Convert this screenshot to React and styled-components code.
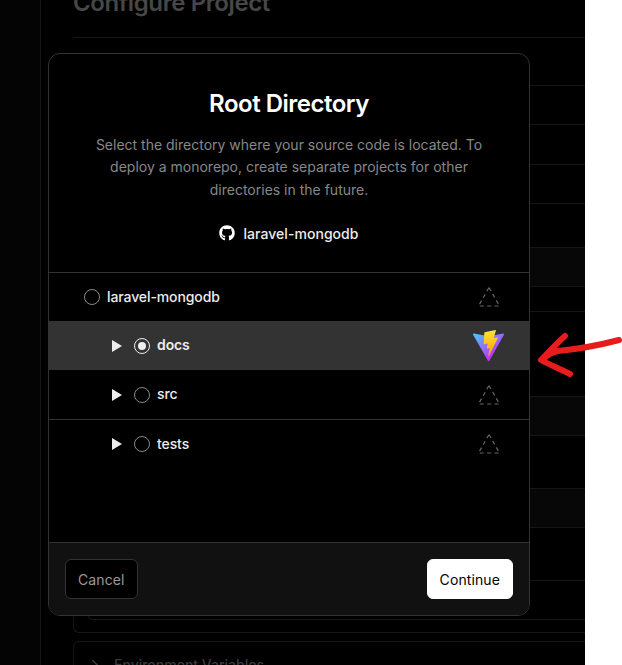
import React from 'react';
import styled, { createGlobalStyle } from 'styled-components';
import { ChevronRight } from 'lucide-react';
import { FaGithub } from 'react-icons/fa';

const GlobalStyle = createGlobalStyle`
  html, body {
    margin: 0;
    padding: 0;
    background: #fff;
    font-family: Inter, "Liberation Sans", sans-serif;
  }
  * {
    box-sizing: border-box;
  }
`;

const Stage = styled.div`
  position: relative;
  width: 622px;
  height: 665px;
  overflow: hidden;
  background: #fff;
`;

const Backdrop = styled.div`
  display: flex;
  width: 585px;
  height: 665px;
  overflow: hidden;
  background: #000;
`;

const Rail = styled.div`
  flex: 0 0 41px;
  background: #040404;
  border-right: 1px solid #141414;
`;

const Content = styled.div`
  flex: 1;
  min-width: 0;
  padding-left: 32px;
`;

const PageTitle = styled.h1`
  margin: -13px 0 0;
  height: 51px;
  font-size: 24px;
  line-height: 32px;
  font-weight: 600;
  letter-spacing: -0.4px;
  color: #474747;
  border-bottom: 1px solid #151515;
`;

const OuterCard = styled.div`
  margin-top: 47px;
  padding-left: 13px;
  padding-bottom: 12px;
  border-left: 1px solid #161616;
  border-bottom: 1px solid #161616;
  border-bottom-left-radius: 6px;
`;

const InnerCard = styled.div`
  border-left: 1px solid #161616;
  border-bottom: 1px solid #161616;
  border-bottom-left-radius: 6px;
`;

const BackRow = styled.div`
  height: ${(p) => p.$height}px;
  background: ${(p) => (p.$shaded ? '#070707' : 'transparent')};
  border-top: 1px solid #151515;
`;

const EnvCard = styled.div`
  display: flex;
  align-items: center;
  gap: 10px;
  margin-top: 8px;
  height: 46px;
  padding-left: 12px;
  border: 1px solid #161616;
  border-right: 0;
  border-bottom: 0;
  border-top-left-radius: 6px;
  color: #3a3a3a;
  font-size: 14px;
  font-weight: 500;
  white-space: nowrap;
`;

const Modal = styled.div`
  position: absolute;
  left: 48px;
  top: 53px;
  width: 482px;
  height: 563px;
  display: flex;
  flex-direction: column;
  overflow: hidden;
  background: #000;
  border: 1px solid #333;
  border-radius: 12px;
`;

const Header = styled.header`
  display: flex;
  flex-direction: column;
  align-items: center;
  padding: 34px 0 29px;
`;

const Title = styled.h2`
  margin: 0;
  font-size: 24px;
  line-height: 32px;
  font-weight: 600;
  letter-spacing: -0.5px;
  color: #fff;
`;

const Description = styled.p`
  margin: 14px 0 0;
  width: 400px;
  font-size: 14px;
  line-height: 22.4px;
  text-align: center;
  color: #888;
`;

const Repo = styled.div`
  display: flex;
  align-items: center;
  gap: 8px;
  margin-top: 22px;
  height: 20px;
  font-size: 14px;
  font-weight: 500;
  letter-spacing: 0.05px;
  color: #ededed;
`;

const List = styled.div`
  flex: 1;
`;

const Row = styled.div`
  display: flex;
  align-items: center;
  height: 49px;
  padding: 0 24px 0 ${(p) => (p.$nested ? 63 : 35)}px;
  background: ${(p) => (p.$selected ? '#333' : 'transparent')};
  border-top: ${(p) => (p.$divided ? '1px solid #333' : '0')};
`;

const Caret = styled.span`
  width: 0;
  height: 0;
  margin-right: 12px;
  border-style: solid;
  border-width: 6px 0 6px 10px;
  border-color: transparent transparent transparent #ededed;
`;

const Radio = styled.span`
  display: flex;
  align-items: center;
  justify-content: center;
  width: 16px;
  height: 16px;
  margin-right: 7px;
  border-radius: 50%;
  border: 1px solid ${(p) => (p.$checked ? '#ededed' : '#888')};
  &::after {
    content: '';
    display: ${(p) => (p.$checked ? 'block' : 'none')};
    width: 8px;
    height: 8px;
    border-radius: 50%;
    background: #ededed;
  }
`;

const RowLabel = styled.span`
  flex: 1;
  padding-bottom: 2px;
  font-size: 14px;
  font-weight: ${(p) => (p.$checked ? 600 : 500)};
  letter-spacing: -0.1px;
  color: #ededed;
`;

const FrameworkSlot = styled.span`
  display: flex;
  justify-content: center;
  flex: 0 0 33px;
`;

const Footer = styled.footer`
  display: flex;
  justify-content: space-between;
  height: 73px;
  padding: 16px;
  background: #111;
  border-top: 1px solid #333;
`;

const Button = styled.button`
  height: 40px;
  min-width: 72px;
  padding: 0 12px;
  font-family: inherit;
  font-size: 14px;
  font-weight: 400;
  letter-spacing: 0.1px;
  border-radius: 6px;
  border: 1px solid ${(p) => (p.$primary ? '#fff' : '#333')};
  background: ${(p) => (p.$primary ? '#fff' : '#000')};
  color: ${(p) => (p.$primary ? '#000' : '#999')};
`;

const Annotation = styled.svg`
  position: absolute;
  left: 530px;
  top: 325px;
`;

const DashedTriangle = () => (
  <svg width="24" height="22" viewBox="0 0 24 22" fill="none">
    <path d="M12 1.5 L22.5 20 L1.5 20 Z" stroke="#666" strokeWidth="1.2" strokeDasharray="4 3.4" />
  </svg>
);

const ViteLogo = () => (
  <svg width="33" height="32" viewBox="0 0 410 404" fill="none">
    <defs>
      <linearGradient id="viteBody" x1="6" y1="33" x2="235" y2="344" gradientUnits="userSpaceOnUse">
        <stop stopColor="#41D1FF" />
        <stop offset="1" stopColor="#BD34FE" />
      </linearGradient>
      <linearGradient id="viteBolt" x1="194.651" y1="8.818" x2="236.076" y2="292.989" gradientUnits="userSpaceOnUse">
        <stop stopColor="#FFEA83" />
        <stop offset="0.083" stopColor="#FFDD35" />
        <stop offset="1" stopColor="#FFA800" />
      </linearGradient>
    </defs>
    <path
      d="M399.641 59.5246L215.643 388.545C211.844 395.338 202.084 395.378 198.228 388.618L10.5817 59.5563C6.38087 52.1896 12.6802 43.2665 21.0281 44.7586L205.223 77.6824C206.398 77.8924 207.601 77.8904 208.776 77.6763L389.119 44.8058C397.439 43.2894 403.768 52.1434 399.641 59.5246Z"
      fill="url(#viteBody)"
    />
    <path
      d="M292.965 1.5744L156.801 28.2552C154.563 28.6937 152.906 30.5903 152.771 32.8664L144.395 174.33C144.198 177.662 147.258 180.248 150.51 179.498L188.42 170.749C191.967 169.931 195.172 173.055 194.443 176.622L183.18 231.775C182.422 235.487 185.907 238.661 189.532 237.56L212.947 230.446C216.577 229.344 220.065 232.527 219.297 236.242L201.398 322.875C200.278 328.294 207.486 331.249 210.492 326.603L212.5 323.5L323.454 102.072C325.312 98.3645 322.108 94.137 318.036 94.9228L279.014 102.454C275.347 103.161 272.227 99.746 273.262 96.1583L298.731 7.86689C299.767 4.27314 296.636 0.855181 292.965 1.5744Z"
      fill="url(#viteBolt)"
    />
  </svg>
);

const backRows = [
  { height: 39 },
  { height: 40 },
  { height: 39 },
  { height: 44 },
  { height: 39, shaded: true },
  { height: 25 },
  { height: 85 },
  { height: 39, shaded: true },
  { height: 53 },
  { height: 39, shaded: true },
  { height: 53 },
  { height: 39 },
];

const folders = [
  { name: 'laravel-mongodb', divided: true },
  { name: 'docs', nested: true, selected: true },
  { name: 'src', nested: true },
  { name: 'tests', nested: true, divided: true },
];

const App = () => (
  <Stage>
    <GlobalStyle />
    <Backdrop>
      <Rail />
      <Content>
        <PageTitle>Configure Project</PageTitle>
        <OuterCard>
          <InnerCard>
            {backRows.map((row, i) => (
              <BackRow key={i} $height={row.height} $shaded={row.shaded} />
            ))}
          </InnerCard>
        </OuterCard>
        <EnvCard>
          <ChevronRight size={18} color="#3a3a3a" />
          Environment Variables
        </EnvCard>
      </Content>
    </Backdrop>

    <Modal>
      <Header>
        <Title>Root Directory</Title>
        <Description>
          Select the directory where your source code is located. To deploy a monorepo, create
          separate projects for other directories in the future.
        </Description>
        <Repo>
          <FaGithub size={16} color="#fff" />
          laravel-mongodb
        </Repo>
      </Header>
      <List>
        {folders.map((folder) => (
          <Row
            key={folder.name}
            $nested={folder.nested}
            $selected={folder.selected}
            $divided={folder.divided}
          >
            {folder.nested && <Caret />}
            <Radio $checked={folder.selected} />
            <RowLabel $checked={folder.selected}>{folder.name}</RowLabel>
            <FrameworkSlot>{folder.selected ? <ViteLogo /> : <DashedTriangle />}</FrameworkSlot>
          </Row>
        ))}
      </List>
      <Footer>
        <Button>Cancel</Button>
        <Button $primary>Continue</Button>
      </Footer>
    </Modal>

    <Annotation width="92" height="55" viewBox="530 325 92 55" fill="none">
      <path
        d="M565 336 C557 343 549 352 541 360 C550 365 560 369 570 374 M542 360 C547 355 552 352 558 351 C578 349 600 345 619 340"
        stroke="#e71c1c"
        strokeWidth="6"
        strokeLinecap="round"
        strokeLinejoin="round"
      />
    </Annotation>
  </Stage>
);

export default App;
